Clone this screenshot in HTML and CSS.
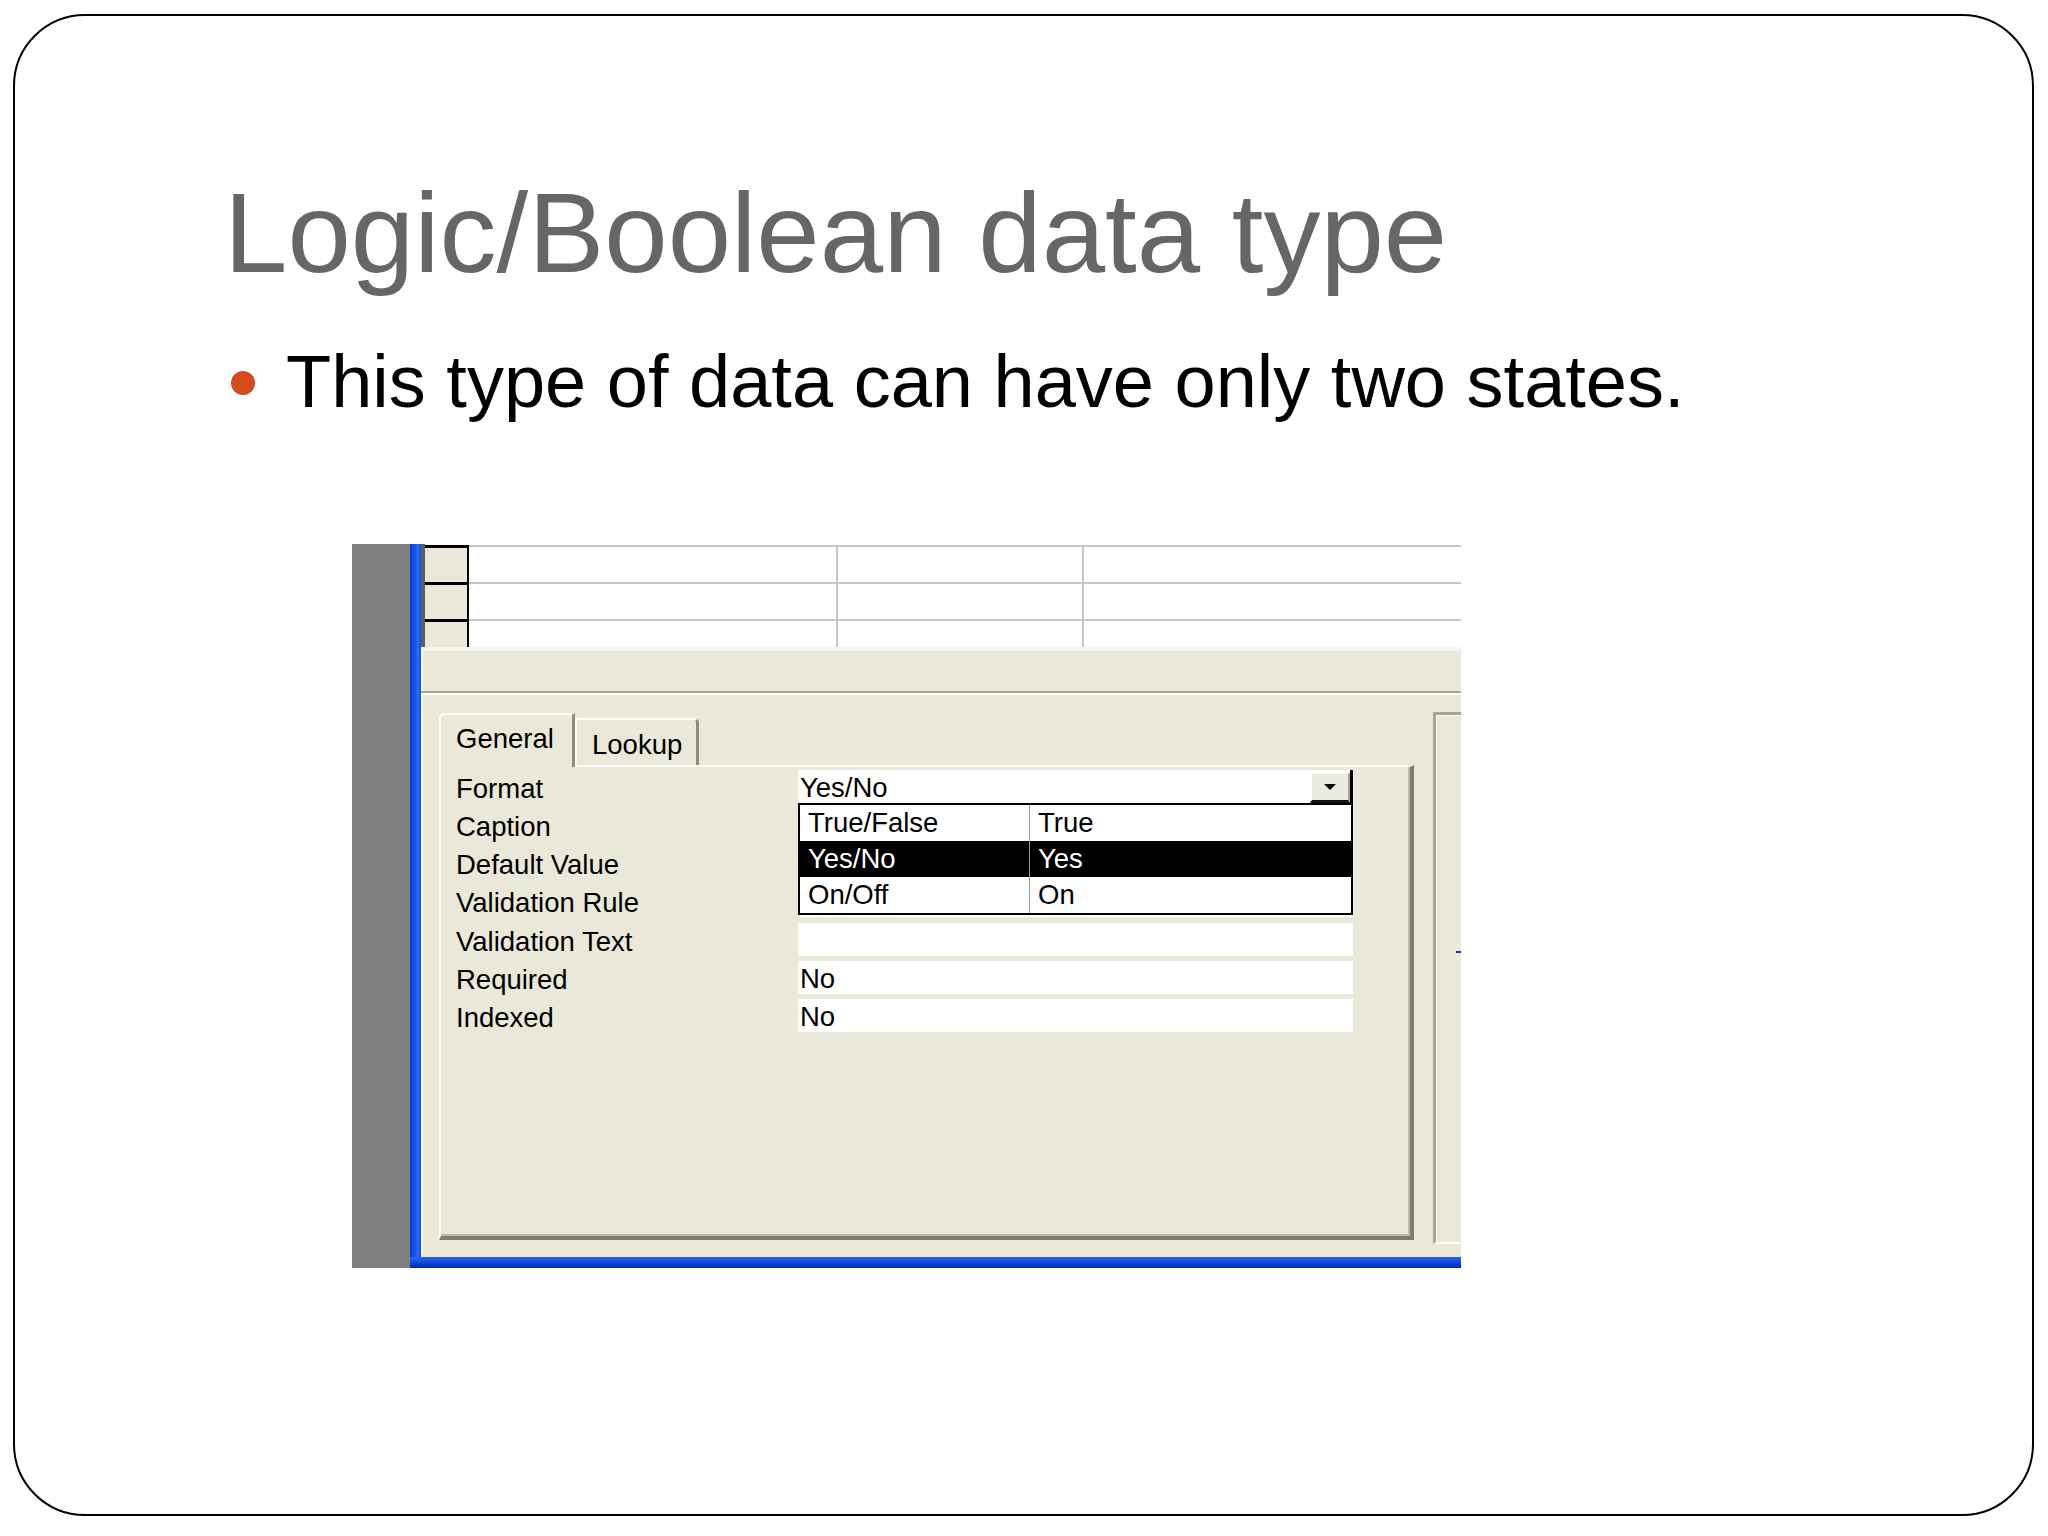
FILE: index.html
```html
<!DOCTYPE html>
<html>
<head>
<meta charset="utf-8">
<title>Logic/Boolean data type</title>
<link rel="stylesheet" href="styles.css">
</head>
<body>
<div class="slide">
  <h1 class="title">Logic/Boolean data type</h1>
  <div class="bullet"><span class="dot"></span><span class="btext">This type of data can have only two states.</span></div>
  <div class="shot">
    <div class="side"></div>
    <div class="win">
      <div class="vblue"></div>
      <div class="inner">
        <div class="grid">
          <div class="grow"><div class="sel"></div><div class="c c1"></div><div class="c c2"></div><div class="c c3"></div></div>
          <div class="grow"><div class="sel"></div><div class="c c1"></div><div class="c c2"></div><div class="c c3"></div></div>
          <div class="grow"><div class="sel"></div><div class="c c1"></div><div class="c c2"></div><div class="c c3"></div></div>
        </div>
        <div class="gapline"></div>
        <div class="band"></div>
        <div class="sep"></div>
        <div class="lower">
          <div class="leftcol">
            <div class="tabs">
              <div class="tab on">General</div>
              <div class="tab off">Lookup</div>
            </div>
            <div class="panel">
              <div class="props">
                <div class="lab">Format</div>
                <div class="val combo">
                  <div class="box fmt"><span class="txt">Yes/No</span><span class="btn"><span class="arrow"></span></span></div>
                  <div class="list">
                    <div class="lrow"><span class="l1">True/False</span><span class="l2">True</span></div>
                    <div class="lrow hi"><span class="l1">Yes/No</span><span class="l2">Yes</span></div>
                    <div class="lrow"><span class="l1">On/Off</span><span class="l2">On</span></div>
                  </div>
                </div>
                <div class="lab">Caption</div>
                <div class="val"><div class="box"></div></div>
                <div class="lab">Default Value</div>
                <div class="val"><div class="box"></div></div>
                <div class="lab">Validation Rule</div>
                <div class="val"><div class="box"></div></div>
                <div class="lab">Validation Text</div>
                <div class="val"><div class="box"></div></div>
                <div class="lab">Required</div>
                <div class="val"><div class="box">No</div></div>
                <div class="lab">Indexed</div>
                <div class="val"><div class="box">No</div></div>
              </div>
            </div>
          </div>
          <div class="frame"><span class="mark"></span></div>
        </div>
      </div>
      <div class="hblue"></div>
    </div>
  </div>
</div>
</body>
</html>
```
FILE: styles.css
```css
html, body {
  margin: 0;
  padding: 0;
  background: #ffffff;
}

.slide {
  box-sizing: border-box;
  margin: 14px 0 0 13px;
  width: 2021px;
  height: 1502px;
  border: 2px solid #000;
  border-radius: 72px;
  background: #fff;
  overflow: hidden;
}

.title {
  margin: 159.5px 0 0 0;
  padding-left: 209px;
  font-family: "Liberation Sans", Arial, sans-serif;
  font-weight: normal;
  font-size: 114px;
  line-height: 114px;
  color: #666666;
  white-space: nowrap;
}

.bullet {
  display: flex;
  align-items: flex-start;
  margin-top: 55px;
  padding-left: 216px;
  height: 74px;
}

.dot {
  width: 24px;
  height: 24px;
  border-radius: 50%;
  background: #d34b1b;
  margin-top: 26.6px;
  margin-right: 31px;
  flex: none;
}

.btext {
  font-family: "Liberation Sans", Arial, sans-serif;
  font-size: 74px;
  line-height: 74px;
  color: #000;
  white-space: nowrap;
}

/* ---------- embedded Access screenshot ---------- */
.shot {
  display: flex;
  margin: 125.6px 0 0 337px;
  width: 1109px;
  height: 724px;
  font-family: "Liberation Sans", Arial, sans-serif;
  font-size: 27.5px;
  color: #000;
}

.side {
  width: 58px;
  background: #807f81;
  flex: none;
}

.win {
  display: grid;
  grid-template-columns: 11px 1040px;
  grid-template-rows: 713px 11px;
  width: 1051px;
}

.vblue {
  background: linear-gradient(90deg, #0b3cd6 0%, #1a55ec 45%, #2d6cf6 75%, #1448e0 100%);
}

.hblue {
  grid-column: 1 / 3;
  background: linear-gradient(180deg, #2a66f2 0%, #1450e6 40%, #0a35c4 80%, #072a9c 100%);
}

.inner {
  display: flex;
  flex-direction: column;
  background: #e9e8d9;
  overflow: hidden;
}

.grid {
  box-sizing: border-box;
  height: 103px;
  padding-top: 1px;
  border-left: 4px solid #5f5f5f;
  background: #fff;
  overflow: hidden;
}

.grow {
  display: flex;
  height: 37px;
}

.sel {
  box-sizing: border-box;
  width: 44px;
  background: #e9e8d9;
  border-top: 3px solid #000;
  border-right: 2px solid #000;
  flex: none;
}

.c {
  box-sizing: border-box;
  border-top: 2px solid #c6c6c6;
  background: #fff;
}

.c1 {
  width: 369px;
  border-right: 2px solid #c6c6c6;
}

.c2 {
  width: 246px;
  border-right: 2px solid #c6c6c6;
}

.c3 {
  flex: 1;
}

.gapline {
  height: 4px;
  background: #f6f6f1;
}

.band {
  height: 40px;
  background: #e9e8d9;
  box-shadow: inset 2px 0 0 #f8f8f3;
}

.sep {
  height: 0;
  border-top: 2px solid #a6a597;
  border-bottom: 2px solid #ffffff;
}

.lower {
  box-sizing: border-box;
  display: flex;
  align-items: flex-start;
  height: 562px;
  padding: 17px 0 0 18px;
  background: #e9e8d9;
  box-shadow: inset 2px 0 0 #f8f8f3;
}

.leftcol {
  width: 975px;
  margin-top: 1px;
  flex: none;
}

.tabs {
  display: flex;
  align-items: flex-end;
  height: 52px;
}

.tab {
  box-sizing: border-box;
  background: #e9e8d9;
  border-top: 2px solid #ffffff;
  border-left: 2px solid #ffffff;
  border-right: 3px solid #8c8b7e;
  white-space: nowrap;
  line-height: 30px;
}

.tab.on {
  position: relative;
  z-index: 1;
  width: 136px;
  height: 54px;
  margin-bottom: -2px;
  padding: 8.5px 0 0 15px;
  border-top-left-radius: 5px;
}

.tab.off {
  width: 124px;
  height: 47px;
  padding: 9.5px 0 0 15px;
  border-top-right-radius: 5px;
  border-left-color: #fbfbf7;
}

.panel {
  box-sizing: border-box;
  width: 975px;
  height: 475px;
  border-top: 2px solid #ffffff;
  border-left: 2px solid #ffffff;
  border-right: 4px solid #7d7c70;
  border-bottom: 4px solid #7d7c70;
  box-shadow: inset -2px -2px 0 #b9b8aa;
  background: #e9e8d9;
}

.props {
  display: grid;
  grid-template-columns: 342px 555px;
  grid-auto-rows: 38.3px;
  padding-left: 15px;
}

.lab {
  padding-top: 4.5px;
  line-height: 34px;
  white-space: nowrap;
}

.val {
  padding-top: 2.5px;
}

.combo {
  position: relative;
}

.box {
  box-sizing: border-box;
  height: 33px;
  padding: 3px 0 0 2px;
  line-height: 30px;
  background: #ffffff;
  white-space: nowrap;
}

.box.fmt {
  display: flex;
  align-items: flex-start;
  padding-top: 0;
  border-right: 3px solid #000;
}

.box.fmt .txt {
  flex: 1;
  padding-top: 3px;
}

.btn {
  box-sizing: border-box;
  display: flex;
  align-items: center;
  justify-content: center;
  width: 40px;
  height: 31px;
  margin-top: 2px;
  background: #ecebe0;
  border-top: 2px solid #ffffff;
  border-left: 2px solid #ffffff;
  border-right: 2px solid #a4a396;
  border-bottom: 3px solid #111111;
}

.arrow {
  width: 0;
  height: 0;
  border-left: 6px solid transparent;
  border-right: 6px solid transparent;
  border-top: 6px solid #000;
}

.list {
  position: absolute;
  left: 0;
  top: 36px;
  box-sizing: border-box;
  width: 555px;
  height: 112px;
  border: 2px solid #000;
  background: #fff;
  z-index: 2;
}

.lrow {
  display: flex;
  height: 36px;
  line-height: 36px;
  white-space: nowrap;
}

.lrow.hi {
  background: #000;
  color: #fff;
}

.l1 {
  box-sizing: border-box;
  width: 230px;
  padding-left: 8px;
  border-right: 1px solid #9a9a9a;
}

.l2 {
  padding-left: 8px;
}

.frame {
  position: relative;
  box-sizing: border-box;
  flex: 1;
  height: 532px;
  margin-left: 19px;
  border-top: 3px solid #a5a497;
  border-left: 3px solid #a5a497;
  border-bottom: 2px solid #ffffff;
  box-shadow: inset 1px 1px 0 #ffffff;
}

.mark {
  position: absolute;
  left: 20px;
  top: 236px;
  width: 5px;
  height: 2px;
  background: #2b2bd8;
}
```
